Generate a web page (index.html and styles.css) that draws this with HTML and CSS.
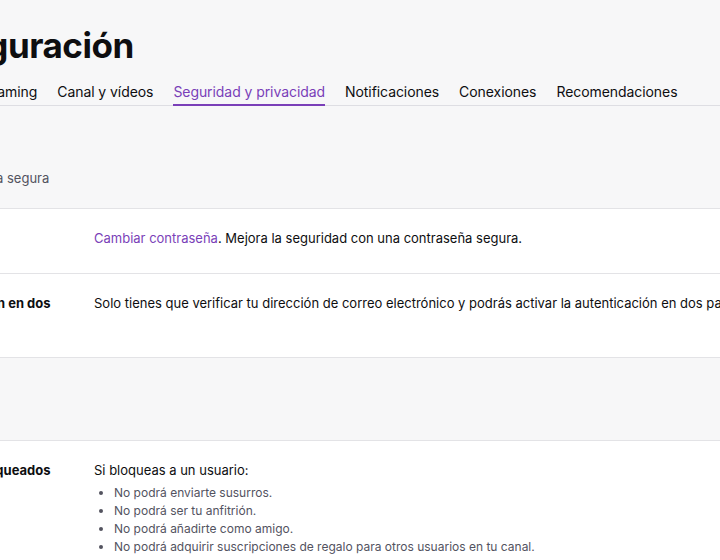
FILE: index.html
```html
<!DOCTYPE html>
<html lang="es">
<head>
<meta charset="utf-8">
<title>Configuración</title>
<link rel="stylesheet" href="styles.css">
</head>
<body>
<div class="page">
  <header class="head">
    <h1 class="title">Configuración</h1>
    <nav class="tabs">
      <a class="tab">Perfil</a>
      <a class="tab">Prime Gaming</a>
      <a class="tab">Canal y vídeos</a>
      <a class="tab active">Seguridad y privacidad</a>
      <a class="tab">Notificaciones</a>
      <a class="tab">Conexiones</a>
      <a class="tab">Recomendaciones</a>
    </nav>
  </header>
  <main class="content">
    <section class="section">
      <div class="sec-head">
        <h3 class="sec-title">Seguridad</h3>
        <p class="sec-desc">Mantén tu cuenta segura</p>
      </div>
      <div class="card">
        <div class="row">
          <div class="label">Contraseña</div>
          <div class="value"><a class="link">Cambiar contraseña</a>. Mejora la seguridad con una contraseña segura.</div>
        </div>
        <div class="row">
          <div class="label">Autenticación en dos pasos</div>
          <div class="value nowrap">Solo tienes que verificar tu dirección de correo electrónico y podrás activar la autenticación en dos pasos.</div>
        </div>
      </div>
    </section>
    <section class="section">
      <div class="sec-head second">
        <h3 class="sec-title">Privacidad</h3>
        <p class="sec-desc">&nbsp;</p>
      </div>
      <div class="card">
        <div class="row">
          <div class="label">Usuarios bloqueados</div>
          <div class="value">
            <p class="lead">Si bloqueas a un usuario:</p>
            <ul class="list">
              <li>No podrá enviarte susurros.</li>
              <li>No podrá ser tu anfitrión.</li>
              <li>No podrá añadirte como amigo.</li>
              <li>No podrá adquirir suscripciones de regalo para otros usuarios en tu canal.</li>
            </ul>
          </div>
        </div>
      </div>
    </section>
  </main>
</div>
</body>
</html>
```
FILE: styles.css
```css
html, body {
  margin: 0;
  padding: 0;
  background: #f7f7f8;
  overflow: hidden;
}
body {
  font-family: Inter, "Noto Sans", sans-serif;
  color: #0e0e10;
  font-size: 13px;
}
.page {
  width: 1000px;
  margin-left: -104px;
}
.head {
  border-bottom: 1px solid #dedee3;
}
.title {
  margin: 0;
  padding-top: 22px;
  font-size: 35px;
  font-weight: 700;
  line-height: 46px;
  letter-spacing: -0.5px;
}
.tabs {
  display: flex;
  gap: 20px;
  margin-top: 14px;
  margin-left: -5px;
}
.tab {
  font-size: 14px;
  line-height: 20px;
  letter-spacing: -0.07px;
  padding-bottom: 2px;
  border-bottom: 2px solid transparent;
  color: #0e0e10;
  margin-bottom: -1px;
}
.tab.active {
  color: #7a3fb8;
  border-bottom-color: #7a3fb8;
}
.content {
  padding-top: 19px;
}
.sec-head {
  padding-top: 22px;
  padding-bottom: 20px;
}
.sec-head.second {
  padding-top: 21px;
}
.sec-title {
  margin: 0;
  font-size: 18px;
  line-height: 22px;
  font-weight: 700;
}
.sec-desc {
  margin: 0;
  line-height: 19px;
  color: #53535f;
}
.card {
  background: #fff;
  border-top: 1px solid #e3e3e6;
  border-bottom: 1px solid #e3e3e6;
}
.row {
  display: flex;
  padding: 20px 20px 25px;
  line-height: 19px;
}
.row + .row {
  border-top: 1px solid #e3e3e6;
}
.label {
  flex: 0 0 158px;
  margin-right: 20px;
  font-weight: 700;
}
.value {
  flex: 1;
}
.nowrap {
  white-space: nowrap;
}
.link {
  color: #7a3fb8;
}
.lead {
  margin: 0 0 4px;
}
.list {
  margin: 0;
  padding-left: 20px;
  font-size: 12px;
  line-height: 18px;
  color: #53535f;
}
```
